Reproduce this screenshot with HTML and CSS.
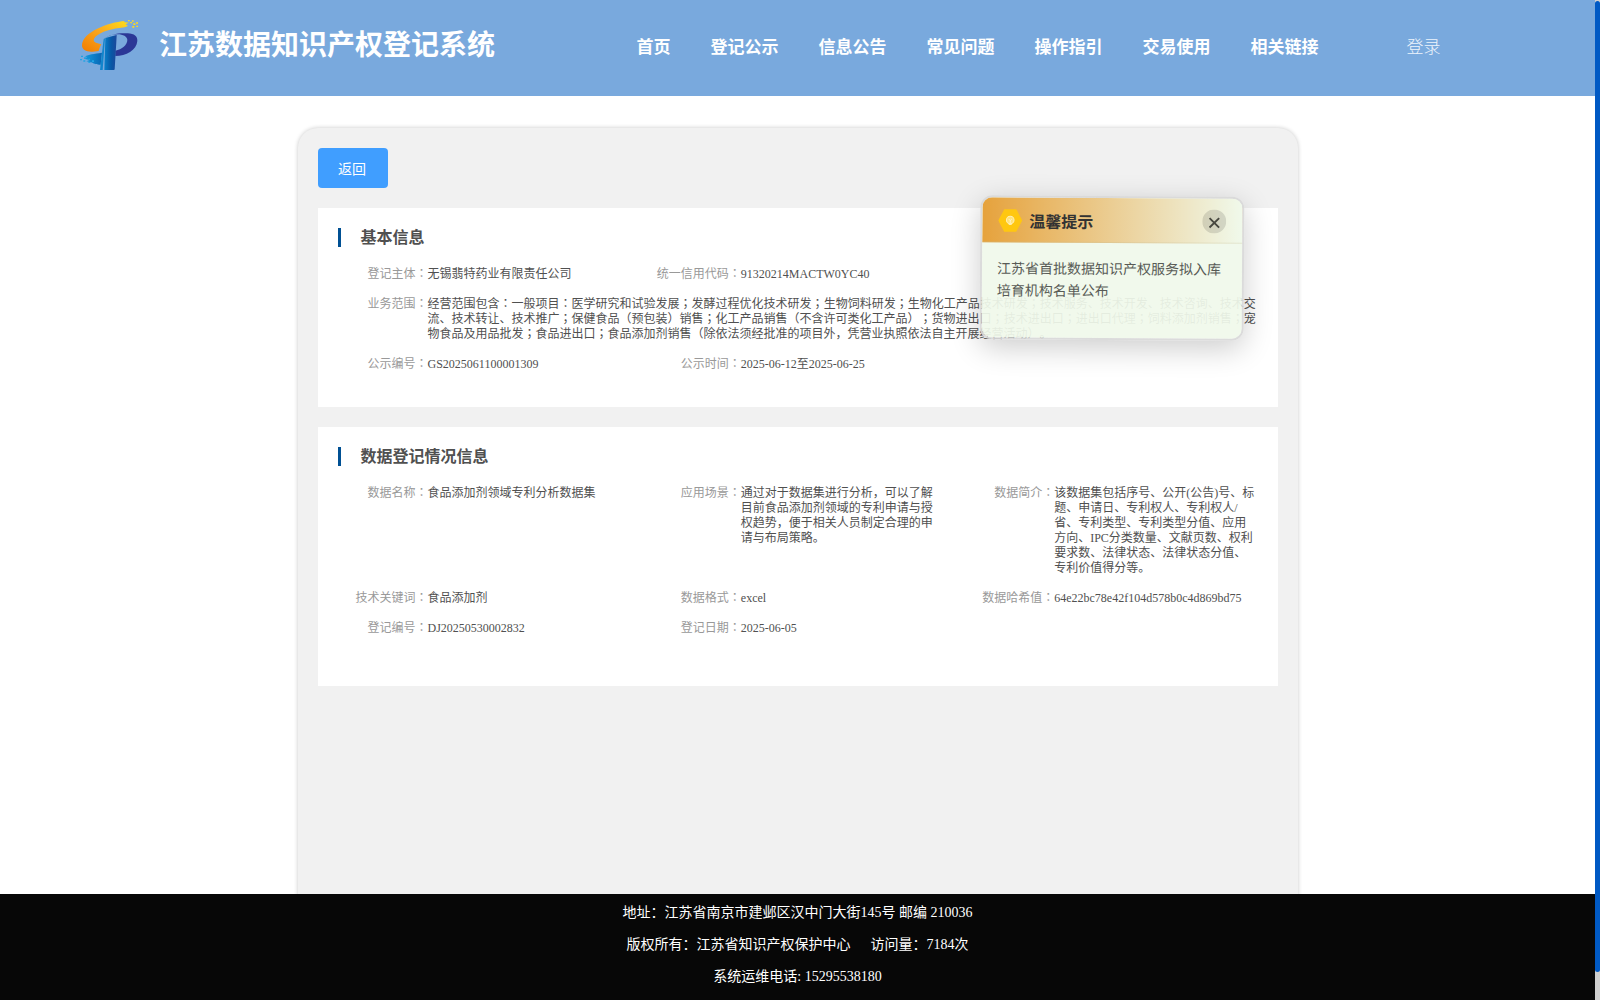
FILE: index.html
```html
<!DOCTYPE html>
<html>
<head>
<meta charset="utf-8">
<title>江苏数据知识产权登记系统</title>
<link rel="stylesheet" href="styles.css">
</head>
<body>
<div class="window">
<div class="page">
  <header class="topbar">
    <svg class="logo" viewBox="0 0 240 210" aria-hidden="true">
      <defs>
        <linearGradient id="gold" x1="0" y1="1" x2="1" y2="0"><stop offset="0" stop-color="#f07c00"/><stop offset=".5" stop-color="#faa61e"/><stop offset="1" stop-color="#ffe01a"/></linearGradient>
        <linearGradient id="blue" x1="0" y1="0" x2="1" y2="0"><stop offset="0" stop-color="#149ce0"/><stop offset="1" stop-color="#0866b4"/></linearGradient>
        <linearGradient id="stem" x1="0" y1="0" x2="1" y2="0"><stop offset="0" stop-color="#0a80ca"/><stop offset=".55" stop-color="#0758a6"/><stop offset="1" stop-color="#1c479b"/></linearGradient>
      </defs>
      <path fill="url(#gold)" d="M164 33C115 37 37 66 36 106c0 14 13 20 32 19l18-2c2-8 5-14 8-20l-14-4c-8-3-10-7-8-12 6-16 46-30 76-33l16-2 10-4-7-5 9-5-15-2 7-5z"/>
      <g fill="#ffd91c"><path d="M174 30h5v4h-5zM181 36h5v4h-5zM186 31h5v4h-5zM190 40h6v5h-6zM198 37h6v4h-6zM187 48h6v5h-6zM199 47h5v4h-5z"/></g>
      <path fill="#2b3796" d="M103 86C121 71 149 68 173 70c20 1 30 9 29 23-2 27-34 45-66 45v-16c20-4 36-17 36-32 0-10-13-17-29-17-16 0-30 4-40 13z"/>
      <path fill="url(#stem)" d="M106 84l34-9-1 20-5 83q0 2-3 2h-28z"/>
      <path fill="url(#blue)" d="M45 139c11-5 26-8 51-11l-4 36c-16 1-20-4-29-7l-14-3 10-4-18-4 10-4z"/>
      <path fill="#1185cc" d="M101 87l4-2-7 95h-8z"/>
      <g fill="#20a5e4"><path d="M33 137h6v4h-6zM42 142h6v4h-6zM30 147h6v4h-6zM40 151h6v4h-6zM55 146h5v4h-5zM66 151h6v5h-6zM55 155h6v4h-6z"/></g>
    </svg>
    <h1 class="site-name">江苏数据知识产权登记系统</h1>
    <nav class="nav"><a>首页</a><a>登记公示</a><a>信息公告</a><a>常见问题</a><a>操作指引</a><a>交易使用</a><a>相关链接</a></nav>
    <a class="login">登录</a>
  </header>

  <main class="main">
    <div class="sheet">
      <button class="back" type="button">返回</button>
      <section class="panel panel-basic">
        <h2 class="panel-title">基本信息</h2>
        <dl class="fields">
          <div class="field"><dt>登记主体<i>：</i></dt><dd>无锡翡特药业有限责任公司</dd></div>
          <div class="field"><dt>统一信用代码<i>：</i></dt><dd>91320214MACTW0YC40</dd></div>
          <div class="field wide"><dt>业务范围<i>：</i></dt><dd>经营范围包含<i>：</i>一般项目<i>：</i>医学研究和试验发展<i>；</i>发酵过程优化技术研发<i>；</i>生物饲料研发<i>；</i>生物化工产品技术研发<i>；</i>技术服务、技术开发、技术咨询、技术交<br>流、技术转让、技术推广<i>；</i>保健食品（预包装）销售<i>；</i>化工产品销售（不含许可类化工产品）<i>；</i>货物进出口<i>；</i>技术进出口<i>；</i>进出口代理<i>；</i>饲料添加剂销售<i>；</i>宠<br>物食品及用品批发<i>；</i>食品进出口<i>；</i>食品添加剂销售（除依法须经批准的项目外，凭营业执照依法自主开展经营活动）。</dd></div>
          <div class="field"><dt>公示编号<i>：</i></dt><dd>GS2025061100001309</dd></div>
          <div class="field"><dt>公示时间<i>：</i></dt><dd>2025-06-12至2025-06-25</dd></div>
        </dl>
      </section>
      <section class="panel panel-data">
        <h2 class="panel-title">数据登记情况信息</h2>
        <dl class="fields">
          <div class="field"><dt>数据名称<i>：</i></dt><dd>食品添加剂领域专利分析数据集</dd></div>
          <div class="field"><dt>应用场景<i>：</i></dt><dd>通过对于数据集进行分析，可以了解<br>目前食品添加剂领域的专利申请与授<br>权趋势，便于相关人员制定合理的申<br>请与布局策略。</dd></div>
          <div class="field"><dt>数据简介<i>：</i></dt><dd>该数据集包括序号、公开(公告)号、标<br>题、申请日、专利权人、专利权人/<br>省、专利类型、专利类型分值、应用<br>方向、IPC分类数量、文献页数、权利<br>要求数、法律状态、法律状态分值、<br>专利价值得分等。</dd></div>
          <div class="field"><dt>技术关键词<i>：</i></dt><dd>食品添加剂</dd></div>
          <div class="field"><dt>数据格式<i>：</i></dt><dd>excel</dd></div>
          <div class="field"><dt>数据哈希值<i>：</i></dt><dd>64e22bc78e42f104d578b0c4d869bd75</dd></div>
          <div class="field"><dt>登记编号<i>：</i></dt><dd>DJ20250530002832</dd></div>
          <div class="field"><dt>登记日期<i>：</i></dt><dd>2025-06-05</dd></div>
        </dl>
      </section>
    </div>
  </main>

  <footer class="footer">
    <p>地址：江苏省南京市建邺区汉中门大街145号 邮编 210036</p>
    <p><span>版权所有：江苏省知识产权保护中心</span><span class="visits">访问量：7184次</span></p>
    <p>系统运维电话: 15295538180</p>
  </footer>
</div>
<div class="scroll-track"><div class="scroll-thumb"></div></div>
</div>

<aside class="notice">
  <div class="notice-head">
    <svg class="notice-icon" viewBox="0 0 24 24"><path fill="#ffc710" d="M6 .8h12L24 12l-6 11.2H6L0 12z"/><circle cx="12" cy="11.5" r="3.8" fill="#ffe27a" stroke="#fff0b5"/><path d="M10.4 10.5l1.6 1.6 1.6-1.6M12 12v3M10.5 16h3" fill="none" stroke="#fff6d5" stroke-width=".8"/></svg>
    <strong>温馨提示</strong>
    <svg class="notice-close" viewBox="0 0 24 24"><circle cx="12" cy="12" r="12" fill="#000" fill-opacity=".12"/><path d="M7.3 8.6l9.6 9.4M16.9 8.6l-9.6 9.4" stroke="#484840" stroke-width="1.9"/></svg>
  </div>
  <p class="notice-text">江苏省首批数据知识产权服务拟入库<br>培育机构名单公布</p>
</aside>
</body>
</html>
```
FILE: styles.css
```css
* { box-sizing: border-box; }
body {
  margin: 0;
  overflow: hidden;
  background: #fff;
  font-family: "Liberation Serif", "Noto Sans CJK SC", serif;
  text-spacing-trim: space-all;
}
h1, h2, p, dl, dd { margin: 0; }
i { font-style: normal; font-family: "Noto Sans CJK JP", sans-serif; line-height: 0; }

.window { display: flex; height: 1000px; }
.page { flex: 1; min-width: 0; display: flex; flex-direction: column; }
.scroll-track { width: 5px; background: #cfcfcf; padding-top: 1px; }
.scroll-thumb { height: 971px; border-radius: 3px; background: #0059c4; }

.topbar {
  flex: none;
  height: 96px;
  display: flex;
  align-items: flex-start;
  padding: 0 0 0 70px;
  background: #79a9dd;
  color: #fff;
  white-space: nowrap;
}
.logo { width: 80px; height: 70px; margin: 10px 9px 0 0; }
.site-name { width: 336px; font-size: 28px; line-height: 40px; margin-top: 26px; font-weight: 700; }
.nav { display: flex; gap: 40px; margin: 35px 0 0 141.5px; font-size: 17px; font-weight: 700; line-height: 26px; }
.login { margin: 35px 0 0 88px; font-size: 17px; line-height: 26px; font-weight: 300; color: #edf4fc; }

.main { flex: 1; min-height: 0; overflow: hidden; padding-top: 32px; }
.sheet {
  width: 1000px;
  height: 900px;
  margin: 0 auto;
  padding: 20px;
  border-radius: 20px;
  background: #f1f1f1;
  box-shadow: 0 0 4px rgba(0, 0, 0, .22);
}
.back {
  display: block;
  width: 70px;
  height: 40px;
  padding: 0 1px 0 0;
  border: 0;
  border-radius: 4px;
  background: #409eff;
  color: #fff;
  font: 14px/38px "Noto Sans CJK SC", sans-serif;
}
.panel { margin-top: 20px; padding: 20px 0 0 20px; background: #fff; }
.panel-basic { height: 199px; }
.panel-data { height: 259px; }
.panel-title {
  height: 19px;
  padding-left: 20px;
  border-left: 3px solid #005093;
  color: #505050;
  font-size: 16px;
  line-height: 19px;
}
.fields {
  display: grid;
  grid-template-columns: repeat(3, 1fr);
  row-gap: 15px;
  margin-top: 20px;
  font-size: 12px;
  line-height: 15px;
}
.field { display: flex; min-width: 0; white-space: nowrap; }
.wide { grid-column: 1 / -1; }
.panel-basic .field:nth-child(4) { grid-column: 1; }
dt { flex: none; width: 90px; text-align: right; color: #999; }
dd { color: #505050; }

.footer {
  flex: none;
  height: 106px;
  padding-top: 3px;
  background: #070707;
  color: #fff;
  font-size: 14px;
  line-height: 32px;
  text-align: center;
}
.footer p { height: 32px; }
.visits { margin-left: 20px; }

.notice {
  position: absolute;
  left: 980px;
  top: 196px;
  width: 264px;
  height: 144px;
  overflow: hidden;
  border: 2px solid rgba(215, 215, 215, .9);
  border-radius: 12px;
  background: rgba(240, 249, 235, .93);
  background-clip: padding-box;
  box-shadow: 0 8px 30px rgba(0, 0, 0, .2);
  transform: rotate(.3deg);
}
.notice-head {
  height: 45px;
  display: flex;
  align-items: center;
  padding: 2px 16px 0;
  background: linear-gradient(90deg, #e6a23c, #f0f9eb);
  border-bottom: 1px solid rgba(200, 190, 150, .3);
  color: #333;
  font-size: 16px;
}
.notice-icon { width: 24px; height: 24px; margin-right: 7px; }
.notice-close { width: 24px; height: 24px; margin-left: auto; }
.notice-text { padding: 16px 0 0 15px; color: #585b56; font-size: 14px; line-height: 22px; white-space: nowrap; }
```
